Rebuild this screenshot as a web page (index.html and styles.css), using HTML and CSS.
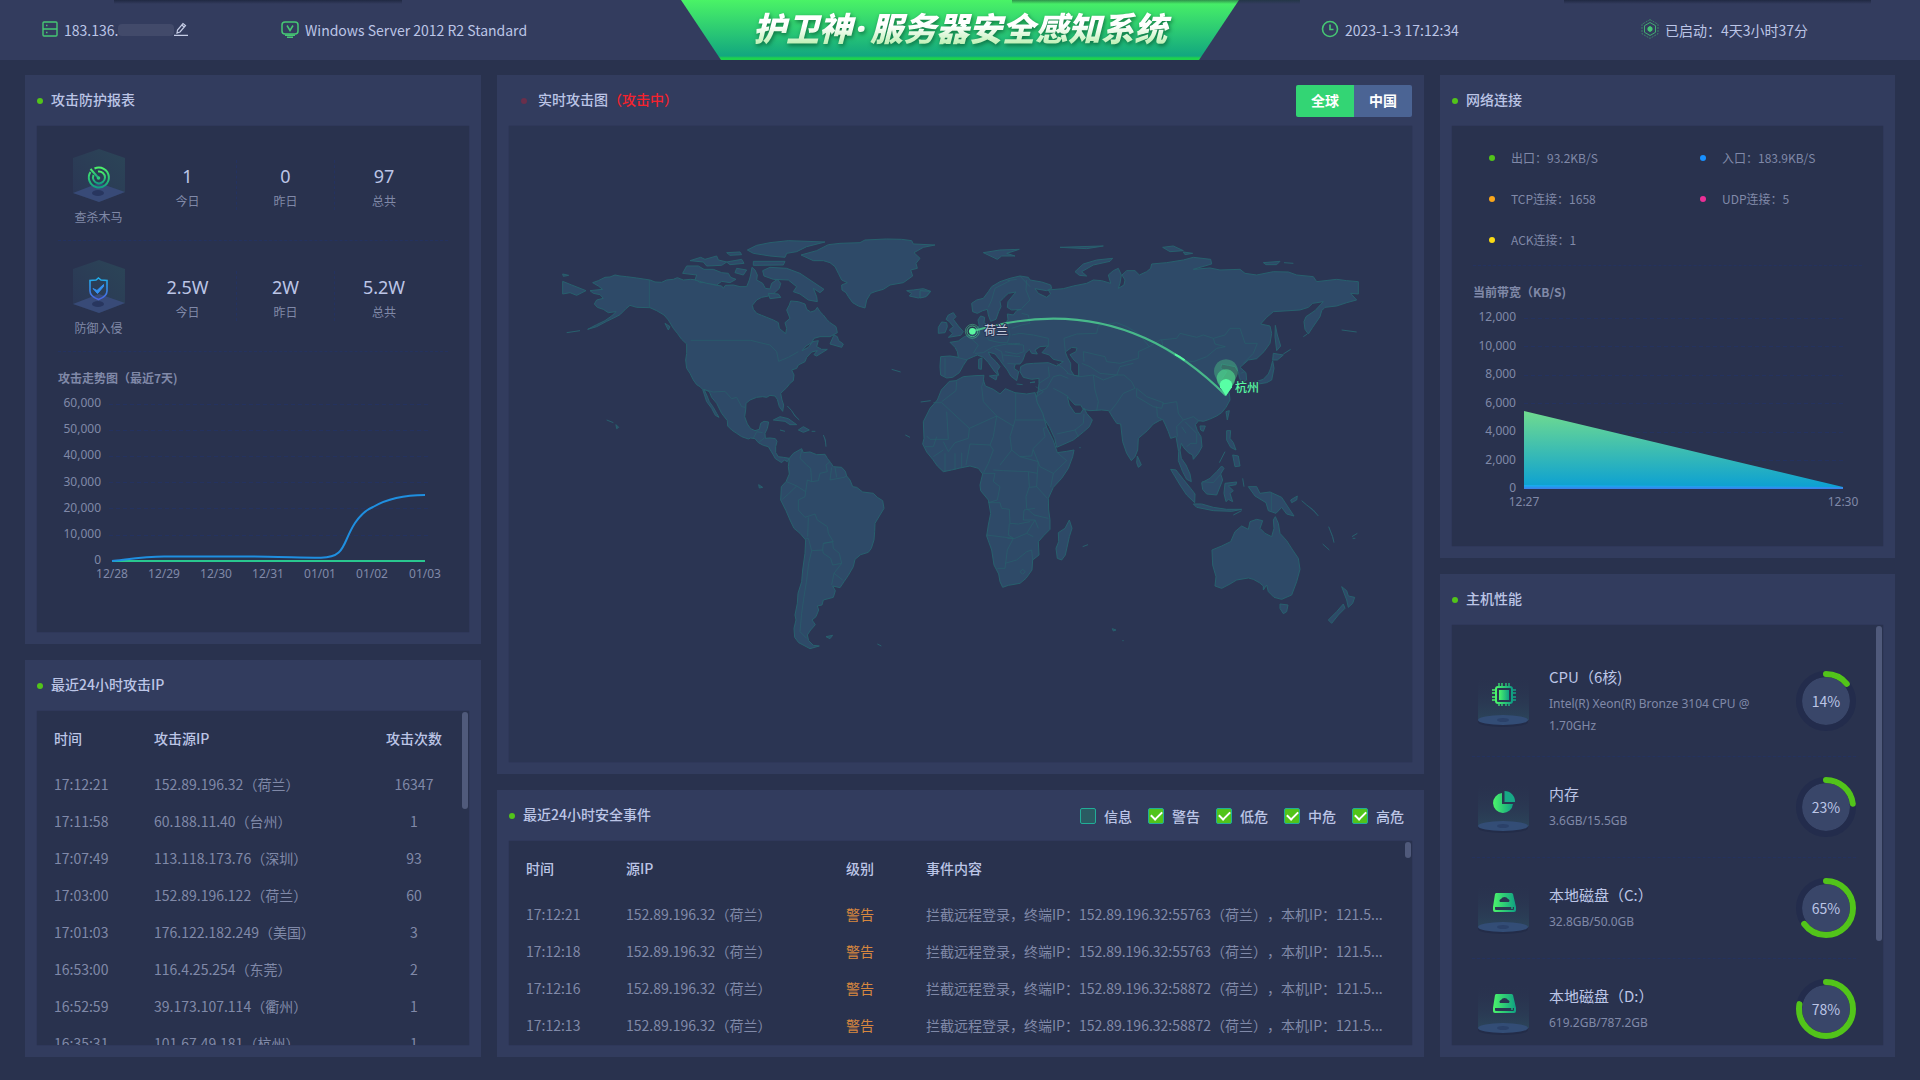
FILE: index.html
```html
<!DOCTYPE html>
<html lang="zh-CN">
<head>
<meta charset="utf-8">
<meta name="viewport" content="width=device-width, initial-scale=1">
<title>护卫神·服务器安全感知系统</title>
<link rel="stylesheet" href="styles.css">
</head>
<body>
<svg class="defs" width="0" height="0" aria-hidden="true">
  <defs>
    <linearGradient id="g-green-v" x1="0" y1="0" x2="0" y2="1"><stop offset="0" stop-color="#4cf169"/><stop offset="1" stop-color="#12a182"/></linearGradient>
    <linearGradient id="g-green-h" x1="0" y1="0" x2="1" y2="0"><stop offset="0" stop-color="#4cf56a"/><stop offset="1" stop-color="#0f9f83"/></linearGradient>
    <linearGradient id="g-blue-v" x1="0" y1="0" x2="0" y2="1"><stop offset="0" stop-color="#1fb0ea"/><stop offset="1" stop-color="#4a63e0"/></linearGradient>
    <linearGradient id="g-hex" x1="0" y1="1" x2="1" y2="0"><stop offset="0" stop-color="#2b3655"/><stop offset="1" stop-color="#2b4557"/></linearGradient>
    <linearGradient id="g-cyl" x1="0" y1="0" x2="0" y2="1"><stop offset="0" stop-color="#2a3450" stop-opacity="0"/><stop offset="1" stop-color="#2b445a"/></linearGradient>
    <linearGradient id="g-area" x1="0" y1="0" x2="0" y2="1"><stop offset="0" stop-color="#70db8f"/><stop offset="1" stop-color="#0a9fd4"/></linearGradient>
    <linearGradient id="g-band" x1="0" y1="0" x2="0" y2="1"><stop offset="0" stop-color="#12b2f0"/><stop offset="1" stop-color="#3f7ce8"/></linearGradient>
    <g id="hexbox">
      <path d="M26 0 52 9V43L26 53 0 44V9z" fill="url(#g-hex)"/>
      <path d="M0 44 26 34 52 43 26 53z" fill="#384a77"/>
      <ellipse cx="25" cy="44" rx="6" ry="3" fill="#28365f"/>
    </g>
    <g id="cylbox">
      <path d="M0 2H51V45H0z" fill="url(#g-cyl)"/>
      <ellipse cx="25" cy="47" rx="25" ry="5" fill="#232c48"/>
      <ellipse cx="25" cy="45" rx="25" ry="5" fill="#334d76"/>
      <ellipse cx="25" cy="45" rx="6" ry="2" fill="#2b4169"/>
    </g>
    <g id="disk">
      <path fill="url(#g-green-h)" fill-rule="evenodd" d="M18 11h15a2 2 0 0 1 2 1l3 13v3a2 2 0 0 1-2 2H17a2 2 0 0 1-2-2v-3l2-13a2 2 0 0 1 1-1zM22 20h9a2 2 0 0 0-1-3 4 4 0 0 0-7 0 2 2 0 0 0-1 3zM17 25v2q0 1 1 1h17q1 0 1-1v-2z"/>
      <circle cx="34" cy="26" r="1" fill="#1cb07f"/>
    </g>
  </defs>
</svg>

<header class="topbar">
  <div class="topbar-side topbar-left">
    <div class="info">
      <svg width="16" height="16" viewBox="0 0 16 16" fill="none" stroke="#46c774" stroke-width="1.4"><rect x="1" y="1" width="14" height="14" rx="1"/><path d="M1 8H15M4 4.500h1.500M4 11.500h1.500"/></svg>
      <span>183.136.</span><span class="masked"></span>
      <button class="edit" aria-label="编辑"><svg width="14" height="14" viewBox="0 0 14 14" fill="none" stroke="#c6cde6" stroke-width="1.200"><path d="M0 13.400H14M3 11 3.500 8 9 1.500 11.500 3.500 6 10zM8 3l2 2"/></svg></button>
    </div>
    <div class="info">
      <svg width="18" height="17" viewBox="0 0 18 17" fill="none" stroke="#46c774" stroke-width="1.500"><rect x="1" y="1" width="16" height="12" rx="3"/><path d="M6 4.500 9 9.500 12 4.500M4 14.300H14M6 16.300H12"/></svg>
      <span>Windows Server 2012 R2 Standard</span>
    </div>
  </div>
  <div class="banner"><h1>护卫神<span class="mid-dot">·</span>服务器安全感知系统</h1></div>
  <div class="topbar-side topbar-right">
    <div class="info">
      <svg width="18" height="18" viewBox="0 0 18 18" fill="none" stroke="#46c774" stroke-width="1.600"><circle cx="9" cy="9" r="7.500"/><path d="M9 4.500V9.500H12.500"/></svg>
      <span>2023-1-3 17:12:34</span>
    </div>
    <div class="info">
      <svg width="18" height="20" viewBox="0 0 18 20" fill="none" stroke="#46c774"><path d="M9 .600 17 5.300V14.700L9 19.400 1 14.700V5.300z" stroke-opacity=".5" stroke-dasharray="2 1"/><path d="M9 3.500 14.500 6.700V13.300L9 16.500 3.500 13.300V6.700z" stroke-opacity=".8"/><path d="M9 7.500 11 8.700V11.300L9 12.500 7 11.300V8.700z" fill="#46c774"/></svg>
      <span>已启动：4天3小时37分</span>
    </div>
  </div>
</header>

<main class="board">
  <div class="col col-left">
    <section class="panel">
      <header class="panel-head"><i class="dot"></i><h2>攻击防护报表</h2></header>
      <div class="box report">
        <div class="stat-row">
          <div class="stat-icon">
            <svg width="52" height="54" viewBox="0 0 52 54"><use href="#hexbox"/><g fill="none" stroke="url(#g-green-v)" stroke-width="2"><path d="M21.500 19.500A10 10 0 1 1 17.500 23"/><path d="M25 22.500A6 6 0 1 1 20.500 26"/><path d="M17.500 20 25.500 29"/></g><circle cx="25.500" cy="29" r="1.800" fill="#2ccc78"/></svg>
            <span>查杀木马</span>
          </div>
          <div class="stat"><b>1</b><span>今日</span></div>
          <div class="stat"><b>0</b><span>昨日</span></div>
          <div class="stat"><b>97</b><span>总共</span></div>
        </div>
        <div class="stat-row">
          <div class="stat-icon">
            <svg width="52" height="54" viewBox="0 0 52 54"><use href="#hexbox"/><path d="M25.500 18 28 20 34 20.500V31Q34 36.500 25.500 39.500 17 36.500 17 31V20.500L23 20z" fill="none" stroke="url(#g-blue-v)" stroke-width="1.600"/><path d="M20 28.500 24 30.500 30.500 24.500 30.500 26.500 24.500 33.500z" fill="#3490f0" stroke="#3490f0"/></svg>
            <span>防御入侵</span>
          </div>
          <div class="stat"><b>2.5W</b><span>今日</span></div>
          <div class="stat"><b>2W</b><span>昨日</span></div>
          <div class="stat"><b>5.2W</b><span>总共</span></div>
        </div>
        <h3 class="chart-title">攻击走势图（最近7天)</h3>
        <svg class="chart" viewBox="37 388 432 200">
          <path class="grid" d="M109 404.500H428M109 430.500H428M109 456.500H428M109 482.500H428M109 508.500H428M109 535.500H428"/>
          <g class="ylab"><text x="101" y="407">60,000</text><text x="101" y="433">50,000</text><text x="101" y="459">40,000</text><text x="101" y="486">30,000</text><text x="101" y="512">20,000</text><text x="101" y="538">10,000</text><text x="101" y="564">0</text></g>
          <g class="xlab"><text x="112" y="578">12/28</text><text x="164" y="578">12/29</text><text x="216" y="578">12/30</text><text x="268" y="578">12/31</text><text x="320" y="578">01/01</text><text x="372" y="578">01/02</text><text x="425" y="578">01/03</text></g>
          <path d="M112 561H425" stroke="#29c78f" stroke-width="2"/>
          <path d="M112 561C130 559 146 556.500 164 556.500C200 556.500 232 556.200 268 556.700C290 557 300 557.700 321 557.700C346 557.700 342 543 355 523C361 514 366 510 373 507C390 497 408 495 425 495" fill="none" stroke="#1f8fe0" stroke-width="2"/>
        </svg>
      </div>
    </section>
    <section class="panel">
      <header class="panel-head"><i class="dot"></i><h2>最近24小时攻击IP</h2></header>
      <div class="box">
        <div class="scroll">
          <table class="data ips">
            <thead><tr><th>时间</th><th>攻击源IP</th><th>攻击次数</th></tr></thead>
            <tbody>
              <tr><td>17:12:21</td><td>152.89.196.32（荷兰）</td><td>16347</td></tr>
              <tr><td>17:11:58</td><td>60.188.11.40（台州）</td><td>1</td></tr>
              <tr><td>17:07:49</td><td>113.118.173.76（深圳）</td><td>93</td></tr>
              <tr><td>17:03:00</td><td>152.89.196.122（荷兰）</td><td>60</td></tr>
              <tr><td>17:01:03</td><td>176.122.182.249（美国）</td><td>3</td></tr>
              <tr><td>16:53:00</td><td>116.4.25.254（东莞）</td><td>2</td></tr>
              <tr><td>16:52:59</td><td>39.173.107.114（衢州）</td><td>1</td></tr>
              <tr><td>16:35:31</td><td>101.67.49.181（杭州）</td><td>1</td></tr>
            </tbody>
          </table>
        </div>
        <i class="thumb" style="height:29%"></i>
      </div>
    </section>
  </div>

  <div class="col col-mid">
    <section class="panel">
      <header class="panel-head head-map"><i class="dot dot-alert"></i><h2>实时攻击图<span class="alert">（攻击中）</span></h2>
        <div class="tabs"><button class="tab active">全球</button><button class="tab">中国</button></div>
      </header>
      <div class="box map">
        <svg viewBox="509 126 903 636">
          <g class="land" transform="translate(540 220) scale(.33333)">
            <path d="M158 188 175 182 195 172 210 171 225 165 240 168 260 170 290 174 330 180 345 186 365 187 380 180 400 178 412 173 430 180 452 178 470 180 480 188 500 187 520 194 545 198 550 205 556 196 580 195 600 200 620 200 628 180 632 165 636 142 645 150 652 165 650 180 668 190 676 205 690 207 695 190 712 178 722 190 718 205 700 222 722 232 700 232 686 228 665 232 650 240 637 256 640 268 650 280 665 286 680 292 700 300 715 308 718 325 726 332 737 341 740 325 735 308 750 295 740 270 748 255 752 243 775 245 795 252 800 268 812 276 825 272 832 262 840 275 850 285 860 298 870 308 888 320 892 338 870 350 840 350 822 355 815 368 798 378 786 392 805 382 818 365 835 362 830 380 845 388 862 388 830 408 822 404 832 392 815 396 800 412 795 425 775 435 770 445 755 450 762 465 760 482 750 490 740 503 722 520 726 540 731 555 728 574 718 560 712 538 705 528 690 526 680 532 668 530 650 532 630 540 618 550 617 570 614 590 622 612 632 626 645 632 658 628 662 610 672 604 686 606 682 625 675 640 676 655 690 654 706 656 711 664 707 680 707 698 715 710 730 712 748 715 742 725 733 720 725 728 706 716 700 705 685 680 670 676 655 668 645 656 632 654 625 657 605 650 590 640 575 630 563 618 562 602 545 580 530 550 515 532 508 515 492 508 500 525 508 545 520 562 530 580 537 592 526 586 515 565 500 545 488 508 480 500 470 494 460 480 450 460 440 445 437 420 440 400 440 372 425 358 412 340 400 325 385 300 372 285 350 272 330 263 290 262 270 256 258 266 240 284 225 292 200 304 170 320 143 328 170 314 195 302 215 288 228 275 205 278 190 268 172 262 163 252 170 240 190 235 180 224 160 220 150 212 188 208 175 198z"/>
            <path d="M68 184 95 195 138 212 110 226 90 218 68 222zM68 162 86 166 70 169z"/>
            <path d="M428 160 440 138 475 138 492 148 520 148 545 158 565 160 572 172 588 178 570 188 545 184 530 195 500 190 465 180 470 165zM450 122 482 112 495 118 530 108 535 120 560 126 545 136 500 138 490 126zM560 98 600 96 605 104 570 106zM622 90 650 76 690 68 745 62 855 66 800 80 770 95 740 100 735 112 690 108 640 100zM640 124 735 124 730 135 640 136zM590 145 620 150 610 165 585 158zM668 152 690 142 740 145 780 160 810 180 852 208 840 218 820 205 830 230 832 245 805 240 780 222 760 215 770 200 745 180 700 178 672 168zM560 126 605 118 612 130 570 134zM685 220 715 222 722 232 690 236z"/>
            <path d="M783 105 830 92 865 74 900 70 960 68 975 60 1040 57 1085 58 1115 62 1120 72 1185 75 1150 82 1122 98 1140 115 1128 130 1132 145 1112 150 1118 168 1090 188 1050 195 1030 208 1008 214 992 220 980 240 975 264 955 258 938 248 925 230 918 218 906 210 905 195 922 188 905 180 895 160 885 140 870 128 850 122 820 122z"/>
            <path d="M1100 212 1120 210 1150 206 1172 214 1160 228 1135 234 1108 228 1115 220zM1195 322 1205 306 1220 308 1222 320 1215 338 1195 340zM1225 285 1240 278 1248 290 1240 298 1255 318 1270 335 1262 346 1225 352 1238 340 1228 330 1240 320 1228 305 1218 298z"/>
            <path d="M870 372 882 345 892 350 896 362 910 372 905 382zM700 600 720 590 745 596 770 614 750 614 735 604zM775 630 790 620 808 630 790 637zM742 558 755 572 765 588 778 600M720 630 735 634M815 634H826M850 645 856 660 858 680M200 600 220 608M228 614 236 622 230 626zM656 794 668 802 658 804zM858 1250 878 1246 870 1256zM1012 1272 1024 1278M1055 448 1082 456M1142 546 1172 542M1096 645 1110 652M80 338 120 332M375 310 390 320 385 330z"/>
            <path d="M748 715 760 700 785 686 790 698 810 696 830 704 855 703 862 715 872 728 880 740 905 742 916 754 920 768 930 780 938 800 950 802 968 816 1000 820 1012 832 1028 842 1032 865 1020 885 1005 910 1004 935 1002 960 994 985 985 997 962 1004 945 1018 940 1040 925 1066 912 1085 900 1103 878 1098 886 1112 880 1132 850 1140 846 1155 832 1158 836 1170 828 1190 816 1200 826 1214 812 1230 802 1245 806 1262 820 1276 838 1278 810 1286 795 1278 776 1268 764 1252 762 1225 768 1200 765 1185 772 1150 774 1120 785 1085 788 1050 795 1000 797 960 780 940 762 925 750 900 738 872 722 840 724 800 738 785 748 762 745 740z"/>
            <path class="border" d="M328 180V262M452 361H632L660 368 690 375 710 395 716 424 745 412 775 395M488 508 520 516 555 514 575 536 590 532 605 560 616 562M640 655 650 635 668 638M655 668 672 655M785 690 780 715 800 735 812 745 815 785 835 782 840 760 862 755 858 735 870 725M875 742 870 780 912 772 920 768M885 742 890 772M740 785 770 798 797 815 802 780 815 785M727 838 745 822 770 798M797 815 795 830 775 840 775 870 795 892 825 882 832 900 862 920 865 940 880 965 850 970 848 990 815 992 805 955 797 955M805 892 803 950M850 970 878 965 880 985 898 1000 905 1030 878 1035 872 1015 850 1000 848 990M905 1030 882 1060 908 1080M882 1060 875 1095M815 992 806 1030 800 1080 792 1130 785 1180 780 1235 800 1255"/>
          </g>
          <g class="land" transform="translate(920 220) scale(.33333)">
            <path d="M62 410 90 408 115 412 112 395 105 382 90 367 115 363 133 350 150 345 165 328 178 318 174 300 182 288 194 292 192 308 205 318 240 316 258 308 264 298 262 282 280 285 290 272 304 268 275 270 262 262 264 245 280 225 288 216 265 220 252 232 240 245 243 260 236 275 228 298 212 304 205 285 202 268 188 272 172 280 158 275 155 250 170 240 190 235 205 215 215 200 240 185 270 175 300 168 325 172 330 180 365 186 392 195 395 205 380 212 345 206 355 220 380 232 392 222 385 210 430 206 460 198 500 190 520 180 545 182 572 190 565 165 580 152 595 145 604 165 600 190 595 205 612 195 615 180 606 165 620 152 645 152 658 165 680 155 692 145 695 132 740 128 790 120 820 112 872 118 875 132 820 148 870 144 900 150 960 148 975 160 1010 165 1060 155 1105 156 1130 165 1180 170 1190 185 1250 178 1280 182 1315 185 1315 222 1292 220 1310 240 1280 248 1250 258 1215 262 1205 272 1200 290 1178 322 1165 342 1155 328 1152 305 1158 290 1185 272 1210 245 1178 250 1165 262 1140 270 1060 275 1040 292 1022 312 1050 318 1055 340 1050 370 1032 395 1010 416 985 420 960 442 978 458 980 480 965 490 958 472 955 455 945 440 925 436 905 432 902 445 920 455 905 478 912 498 928 520 930 540 918 562 905 578 890 588 868 598 850 604 836 602 826 614 832 632 843 650 846 680 835 700 820 718 818 705 805 698 792 684 784 670 780 690 784 715 798 735 810 762 814 785 800 778 788 755 775 722 776 695 768 650 752 655 745 635 735 612 728 598 718 602 700 612 682 632 655 655 653 690 645 710 634 722 620 700 608 665 602 612 590 610 578 592 566 572 545 570 510 572 490 568 482 555 465 555 442 530 448 555 465 580 482 580 492 564 500 580 517 600 508 620 490 636 460 660 410 682 404 655 388 620 368 590 352 552 347 538 355 510 357 490 357 475 335 478 310 472 300 455 302 440 318 432 340 430 385 428 410 438 430 425 400 418 388 405 366 398 384 378 360 380 345 390 352 402 335 400 328 388 316 400 308 422 300 432 286 432 282 445 296 455 290 482 272 468 262 450 248 432 238 418 225 402 205 396 212 410 228 425 240 440 232 452 236 466 224 455 205 428 190 412 172 405 160 410 142 418 130 436 118 458 98 472 80 474 62 465 60 440z"/>
            <path d="M0 212 32 214 18 230 0 234zM190 98 240 90 298 88 260 100 285 108 245 108 232 118zM465 155 490 132 530 120 578 115 570 124 520 135 485 155 500 168 478 166zM420 82 480 80 550 78 500 86zM728 82 760 78 790 92 750 95zM790 96 818 100 795 104zM1030 128 1080 124 1070 134 1038 134zM1092 128 1120 130M176 418 186 414 184 448 176 446zM208 468 232 465 228 480zM290 492 308 494M330 488 345 486z"/>
            <path d="M88 484 108 482 130 470 165 467 192 466 190 480 196 498 220 508 240 522 256 506 285 518 320 522 345 518 352 548 368 580 380 622 400 662 412 698 440 694 462 690 458 710 445 745 425 775 400 802 385 835 386 870 390 900 390 928 372 946 355 965 357 1005 338 1020 336 1050 318 1075 300 1090 265 1096 248 1102 240 1085 236 1062 222 1035 215 990 200 948 205 915 212 880 205 840 182 812 180 795 188 762 175 745 150 738 120 744 95 750 70 755 52 738 38 718 20 696 8 672 12 655 10 605 30 565 52 540 64 510z"/>
            <path d="M448 900 456 925 448 950 436 1005 425 1020 412 1015 408 985 416 965 415 938 435 925zM652 708 664 735 655 742 650 728zM840 618 856 618 850 634 842 630zM918 575 928 572 922 600zM1058 420 1060 400 1090 405 1072 420zM1058 422 1062 445 1055 480 1040 488 1015 492 1000 500 985 498 1000 488 1030 478 1045 462 1052 445zM1066 316 1072 345 1082 378 1070 392 1065 350zM1090 402 1112 388M1150 350 1162 342"/>
            <path d="M752 748 768 750 790 778 812 805 825 822 824 848 800 825 780 795 765 770zM820 852 845 852 880 862 920 868 965 868 935 874 880 872 830 862zM845 788 870 775 890 755 905 738 912 745 902 762 908 780 890 825 860 822 848 808zM915 790 950 786 948 794 925 798 940 812 930 820 938 845 925 838 918 845 912 820zM920 632 932 632 930 655 940 668 948 690 932 682 920 660zM938 705 955 708 960 738 945 740zM898 728 915 695M968 775 972 800M940 885 965 872M985 800 1010 800 1020 820 1050 816 1085 832 1100 855 1122 888 1100 882 1085 862 1068 880 1045 872 1038 848 1005 828zM1112 840 1132 828 1130 840 1115 848zM1145 842 1160 855 1180 870 1195 888M1226 920 1238 950 1242 968M1208 972 1228 990M1296 950 1312 940M1298 955H1306M1265 330 1310 336M478 683H482M488 980 504 974"/>
            <path d="M876 990 905 978 932 965 945 935 965 918 985 928 990 905 1010 898 1028 902 1020 925 1035 940 1055 950 1062 925 1060 900 1066 890 1075 910 1080 940 1100 962 1118 990 1135 1015 1140 1048 1130 1085 1115 1125 1085 1138 1062 1132 1045 1115 1040 1095 1030 1110 1030 1098 1018 1088 1000 1078 985 1074 950 1080 930 1092 905 1105 885 1098 888 1070 878 1035zM1080 1152 1104 1155 1100 1175 1090 1181 1080 1165zM1265 1100 1280 1112 1285 1128 1304 1132 1298 1150 1285 1162 1280 1140zM1270 1152 1275 1165 1255 1185 1235 1210 1225 1200 1250 1175zM577 1226 588 1230 580 1233zM607 1262H611"/>
            <path class="sea" d="M436 396 455 382 471 384 468 395 450 404 462 420 476 432 476 468 462 466 452 450 452 430 442 412z"/>
            <path class="border" d="M75 415V468M110 412 142 420M160 400 175 375 160 362 148 345M165 400 190 398 220 380 260 372 300 370M200 340 205 360 240 368 262 368M180 318V345M275 325 305 315 330 310 325 285 305 280M305 265 330 240 318 210 320 180M205 262 215 240 225 205 270 182M262 182 290 178M275 345 300 340 340 345 385 355 385 380M262 372 310 375 312 395 290 402 255 395M225 385 245 395 250 425M250 405 280 408 300 410M262 430 285 432M262 300 270 345 262 368M432 355 470 342 530 340 535 318 590 308 620 320 655 340 688 380 720 360 770 355 780 340 830 352 850 345 880 355 915 345 930 325 960 325 975 370 1012 370 1000 400 970 430M432 355 436 395M725 360 730 385 780 420 820 425 860 410 890 385 916 380 885 372 880 355M688 380 655 395 655 415 600 430 560 425 555 410 490 395 492 425M485 430 510 440 540 460 590 465 600 440 640 430M440 460 480 470 520 465 550 480 590 465 612 465 635 485 645 505 610 520 590 550 570 575M520 465 525 510 535 545 530 572M650 505 680 530 730 548 725 565 700 560 650 530zM728 552 770 545 775 580 790 600 770 620 772 650M710 560 712 590 725 598M790 600 820 590 838 604M795 605 830 640 830 670 812 670 800 680M798 640 785 620M345 520 380 505 400 470 420 465 445 475M385 440 388 470 357 490M400 505 420 515 445 530M410 430 430 445 445 460M410 642 465 630 490 610 492 582M465 630 475 650M347 500 370 515 350 530M1054 818V872M846 785 880 788 900 765M975 455 962 460M300 168 330 200"/>
            <path class="border" d="M110 484 108 512 65 545M40 548H65L148 625 230 588 190 545 185 500 192 480M80 575 85 658H30L20 648M148 625 145 655 105 668 85 695 70 665M230 588 280 618 287 595V518M287 600H372M230 588 220 650 210 675 150 672 138 735M280 618 270 650 275 690 300 710 335 708 340 685 375 650 370 625 380 622M210 675 220 690 205 730 190 760M240 735 275 690M220 750 250 752 325 755 352 760 355 725 300 710M340 690 360 740 400 760 440 722 412 698M400 760 392 802M325 755 328 800 318 830 320 865 342 885 385 895M328 802 350 800 382 835M352 760 350 800M190 760H225L220 785 240 800 232 840 205 848M205 848H240L245 865 268 868 270 910 295 912 330 905M268 910 265 945 280 955 200 945M280 955 262 990 255 1045H232M262 955 285 955 320 940 340 950M255 1030 290 1020 320 995 335 990 338 1020M320 940 345 900 310 900 312 870 345 865M355 925 345 900M300 1055 308 1048 316 1055 308 1063zM105 700V750M125 698V742M75 700V755M40 710 70 690M15 680H40L50 650"/>
          </g>
          <g transform="translate(920 220) scale(.33333)">
            <path d="M157 334Q595 202 918 527" fill="none" stroke="#4ccb90" stroke-opacity=".85" stroke-width="6"/>
            <path d="M765 403Q780 410 794 421" fill="none" stroke="#57f7a1" stroke-width="6"/>
            <g fill="none" stroke="#4ddb92"><circle cx="157" cy="334" r="21" stroke-width="3" stroke-opacity=".45"/><circle cx="157" cy="334" r="16" stroke-width="3" stroke-opacity=".7"/></g>
            <circle cx="157" cy="334" r="10" fill="#5af7a0"/>
            <g fill="#50e090">
              <path fill-opacity=".35" d="M886 470A36 36 0 1 1 950 470L918 527z"/>
              <path fill-opacity=".6" d="M893 488A28 28 0 1 1 943 488L918 527z"/>
              <path fill="#58ffa5" d="M900 502A19 19 0 1 1 936 502L918 527z"/>
            </g>
          </g>
          <text class="place" x="984" y="335">荷兰</text>
          <text class="place target" x="1235" y="392">杭州</text>
        </svg>
      </div>
    </section>
    <section class="panel">
      <header class="panel-head"><i class="dot"></i><h2>最近24小时安全事件</h2>
        <div class="filters">
          <label><input type="checkbox">信息</label>
          <label><input type="checkbox" checked>警告</label>
          <label><input type="checkbox" checked>低危</label>
          <label><input type="checkbox" checked>中危</label>
          <label><input type="checkbox" checked>高危</label>
        </div>
      </header>
      <div class="box">
        <div class="scroll">
          <table class="data events">
            <thead><tr><th>时间</th><th>源IP</th><th>级别</th><th>事件内容</th></tr></thead>
            <tbody>
              <tr><td>17:12:21</td><td>152.89.196.32（荷兰）</td><td class="warn">警告</td><td>拦截远程登录，终端IP：152.89.196.32:55763（荷兰），本机IP：121.5...</td></tr>
              <tr><td>17:12:18</td><td>152.89.196.32（荷兰）</td><td class="warn">警告</td><td>拦截远程登录，终端IP：152.89.196.32:55763（荷兰），本机IP：121.5...</td></tr>
              <tr><td>17:12:16</td><td>152.89.196.32（荷兰）</td><td class="warn">警告</td><td>拦截远程登录，终端IP：152.89.196.32:58872（荷兰），本机IP：121.5...</td></tr>
              <tr><td>17:12:13</td><td>152.89.196.32（荷兰）</td><td class="warn">警告</td><td>拦截远程登录，终端IP：152.89.196.32:58872（荷兰），本机IP：121.5...</td></tr>
            </tbody>
          </table>
        </div>
        <i class="thumb" style="height:8%"></i>
      </div>
    </section>
  </div>

  <div class="col col-right">
    <section class="panel">
      <header class="panel-head"><i class="dot"></i><h2>网络连接</h2></header>
      <div class="box net">
        <ul class="legend">
          <li><i class="dot"></i>出口：93.2KB/S</li>
          <li><i class="dot dot-blue"></i>入口：183.9KB/S</li>
          <li><i class="dot dot-orange"></i>TCP连接：1658</li>
          <li><i class="dot dot-pink"></i>UDP连接：5</li>
          <li><i class="dot dot-yellow"></i>ACK连接：1</li>
        </ul>
        <h3 class="chart-title">当前带宽（KB/S)</h3>
        <svg class="chart" viewBox="1452 302 431 220">
          <path class="grid" d="M1524 318.500H1843M1524 346.500H1843M1524 375.500H1843M1524 403.500H1843M1524 432.500H1843M1524 460.500H1843"/>
          <path d="M1524 411 1843 487V489H1524z" fill="url(#g-area)"/>
          <path d="M1524 485 1843 487V489H1524z" fill="url(#g-band)"/>
          <g class="ylab"><text x="1516" y="321">12,000</text><text x="1516" y="350">10,000</text><text x="1516" y="378">8,000</text><text x="1516" y="407">6,000</text><text x="1516" y="435">4,000</text><text x="1516" y="464">2,000</text><text x="1516" y="492">0</text></g>
          <g class="xlab"><text x="1524" y="506">12:27</text><text x="1843" y="506">12:30</text></g>
        </svg>
      </div>
    </section>
    <section class="panel">
      <header class="panel-head"><i class="dot"></i><h2>主机性能</h2></header>
      <div class="box">
        <div class="scroll hosts">
          <div class="host host-tall">
            <svg width="52" height="52" viewBox="0 0 52 52"><use href="#cylbox"/><g stroke="url(#g-green-h)" fill="none" stroke-width="1.400"><rect x="18" y="12" width="16" height="16" rx="2" stroke-width="2"/><path d="M21 8v3.500M24 8v3.500M28 8v3.500M31 8v3.500M21 28v3M24 28v3M28 28v3M31 28v3M14 15h3M14 18h3M14 22h3M14 25h3M35 15h3M35 18h3M35 22h3M35 25h3"/></g><rect x="21" y="15" width="10" height="10" fill="url(#g-green-h)"/></svg>
            <div class="host-text"><h3>CPU（6核)</h3><p>Intel(R) Xeon(R) Bronze 3104 CPU @ 1.70GHz</p></div>
            <div class="ring"><svg viewBox="0 0 60 60"><circle class="disc" cx="30" cy="30" r="24"/><circle class="track" cx="30" cy="30" r="27"/><circle class="value" cx="30" cy="30" r="27" pathLength="100" stroke-dasharray="14 100"/></svg><span>14%</span></div>
          </div>
          <div class="host">
            <svg width="52" height="52" viewBox="0 0 52 52"><use href="#cylbox"/><path d="M24 12A10 10 0 1 0 35 23H24z" fill="url(#g-green-h)"/><path d="M26.500 10A10.500 10.500 0 0 1 37 21H26.500z" fill="#17a886"/></svg>
            <div class="host-text"><h3>内存</h3><p>3.6GB/15.5GB</p></div>
            <div class="ring"><svg viewBox="0 0 60 60"><circle class="disc" cx="30" cy="30" r="24"/><circle class="track" cx="30" cy="30" r="27"/><circle class="value" cx="30" cy="30" r="27" pathLength="100" stroke-dasharray="23 100"/></svg><span>23%</span></div>
          </div>
          <div class="host">
            <svg width="52" height="52" viewBox="0 0 52 52"><use href="#cylbox"/><use href="#disk"/></svg>
            <div class="host-text"><h3>本地磁盘（C:）</h3><p>32.8GB/50.0GB</p></div>
            <div class="ring"><svg viewBox="0 0 60 60"><circle class="disc" cx="30" cy="30" r="24"/><circle class="track" cx="30" cy="30" r="27"/><circle class="value" cx="30" cy="30" r="27" pathLength="100" stroke-dasharray="65 100"/></svg><span>65%</span></div>
          </div>
          <div class="host">
            <svg width="52" height="52" viewBox="0 0 52 52"><use href="#cylbox"/><use href="#disk"/></svg>
            <div class="host-text"><h3>本地磁盘（D:）</h3><p>619.2GB/787.2GB</p></div>
            <div class="ring"><svg viewBox="0 0 60 60"><circle class="disc" cx="30" cy="30" r="24"/><circle class="track" cx="30" cy="30" r="27"/><circle class="value" cx="30" cy="30" r="27" pathLength="100" stroke-dasharray="78 100"/></svg><span>78%</span></div>
          </div>
        </div>
        <i class="thumb" style="height:75%"></i>
      </div>
    </section>
  </div>
</main>
</body>
</html>
```
FILE: styles.css
```css
:root {
  --bg: #29324e;
  --panel: #323c5e;
  --text: #bcc5e6;
  --muted: #8089a8;
  --line: #24325f;
  --green: #52c41a;
}

* { box-sizing: border-box; margin: 0; padding: 0; }

body {
  display: flex;
  flex-direction: column;
  height: 100vh;
  background: var(--bg);
  color: var(--text);
  font: 14px/20px "Noto Sans CJK SC", "Noto Sans", sans-serif;
  text-spacing-trim: space-all;
  overflow: hidden;
}

svg { display: block; flex: none; }
button { border: 0; background: none; font: inherit; color: inherit; }
.defs { position: absolute; }

/* top bar */
.topbar {
  position: relative;
  display: grid;
  grid-template-columns: 1fr 558px 1fr;
  height: 60px;
  flex: none;
  background: #333c5e;
}
.topbar::after {
  content: "";
  position: absolute;
  inset: 0 0 auto;
  height: 4px;
  background:
    linear-gradient(rgba(20, 28, 48, .6), transparent) 7% 0 / 15% 100% no-repeat,
    linear-gradient(rgba(20, 48, 48, .5), transparent) 62% 0 / 15% 100% no-repeat,
    linear-gradient(rgba(20, 28, 48, .6), transparent) 97% 0 / 16% 100% no-repeat;
}
.topbar-side { display: grid; align-items: center; }
.topbar-left { grid-template-columns: 239px 1fr; padding-left: 42px; }
.topbar-right { grid-template-columns: 320px 1fr; padding-left: 82px; }
.info { display: flex; align-items: center; gap: 6px; }
.info svg { margin-bottom: 2px; }
.masked {
  width: 56px;
  height: 12px;
  margin-left: -6px;
  border-radius: 4px;
  background: #424a6a;
}
.edit { margin-left: -6px; }

.banner {
  display: flex;
  justify-content: center;
  align-items: center;
  background: linear-gradient(#4af366, #12a77f 56px, #1ed24e 58px);
  clip-path: polygon(0 0, 100% 0, 518px 100%, 40px 100%);
}
.banner h1 {
  font-size: 33px;
  line-height: 44px;
  font-weight: 900;
  font-style: italic;
  background: linear-gradient(#fff 45%, #bdf0b4 85%);
  -webkit-background-clip: text;
  background-clip: text;
  color: transparent;
  filter: drop-shadow(1px 2px 2px rgba(6, 92, 52, .8));
  padding: 0 6px;
  margin-bottom: 4px;
}
.mid-dot { margin: 0 4px; font-family: "Noto Sans", sans-serif; }

/* board */
.board {
  flex: 1;
  min-height: 0;
  display: grid;
  grid-template-columns: 456fr 927fr 455fr;
  gap: 16px;
  padding: 15px 25px 23px;
}
.col { display: grid; gap: 16px; min-width: 0; min-height: 0; }
.col-left { grid-template-rows: minmax(0, 569fr) minmax(0, 397fr); }
.col-mid { grid-template-rows: minmax(0, 699fr) minmax(0, 267fr); }
.col-right { grid-template-rows: minmax(0, 1fr) minmax(0, 1fr); }
.panel {
  display: flex;
  flex-direction: column;
  min-width: 0;
  padding: 0 12px 12px;
  background: var(--panel);
}

.panel-head { display: flex; align-items: center; gap: 8px; height: 51px; flex: none; }
.panel-head h2 { padding-bottom: 3px; font-size: 14px; line-height: 20px; font-weight: 500; }
.dot { width: 6px; height: 6px; flex: none; border-radius: 50%; background: var(--green); }
.dot-blue { background: #1890ff; }
.dot-orange { background: #faa61a; }
.dot-pink { background: #eb2f96; }
.dot-yellow { background: #fadb14; }
.dot-alert { background: #6a2f4b; }
.head-map { padding-left: 12px; gap: 11px; }
.alert { color: #f5222d; }

.box { position: relative; flex: 1; min-height: 0; background: var(--bg); box-shadow: 0 0 1px #232c48; overflow: hidden; }
.scroll { height: 100%; overflow-y: auto; scrollbar-width: none; }
.thumb { position: absolute; top: 1px; right: 1px; width: 6px; border-radius: 3px; background: #505a7b; }

/* attack report */
.report { padding-top: 4px; }
.stat-row {
  display: grid;
  grid-template-columns: 81px repeat(3, 1fr);
  align-items: center;
  height: 111px;
  margin: 0 21px;
  padding-right: 15px;
  border-bottom: 1px dashed var(--line);
}
.stat-icon { display: flex; flex-direction: column; align-items: center; gap: 5px; padding-top: 4px; }
.stat-icon span, .stat span { font-size: 12px; line-height: 18px; color: var(--muted); }
.stat { display: flex; flex-direction: column; align-items: center; border-right: 1px dashed var(--line); }
.stat:last-child { border-right: 0; }
.stat b { font-family: "Noto Sans", sans-serif; font-size: 18px; line-height: 32px; font-weight: 400; }

.chart-title { margin: 17px 21px 1px; font-size: 12px; line-height: 18px; font-weight: 700; color: var(--muted); }
.chart { width: 100%; height: auto; }
.chart text { font-family: "Noto Sans", sans-serif; font-size: 12px; fill: var(--muted); }
.ylab { text-anchor: end; }
.xlab { text-anchor: middle; }
.grid { stroke: var(--line); stroke-dasharray: 4 3; fill: none; }

/* data tables */
.data { width: 100%; border-collapse: collapse; table-layout: fixed; color: var(--muted); }
.data th { height: 54px; text-align: left; font-weight: 500; color: var(--text); }
.data td { height: 37px; white-space: nowrap; }
.data th:first-child, .data td:first-child { padding-left: 17px; width: 117px; }
.ips th:last-child, .ips td:last-child { width: 110px; text-align: center; }
.events th:nth-child(2) { width: 220px; }
.events th:nth-child(3) { width: 80px; }
.warn { color: #d6873f; }

/* map */
.map { background: #2b3553; }
.map svg { width: 100%; height: 100%; }
.land path { fill: #2e4a68; stroke: #27606d; stroke-width: 3; stroke-linejoin: round; }
.land .border { fill: none; stroke-width: 2; }
.land .sea { fill: #2b3553; }
.place { font-size: 12px; fill: #ccd2e2; stroke: #2b3553; stroke-width: 2px; paint-order: stroke; }
.place.target { fill: #58f7a1; font-weight: 500; }

.tabs { display: flex; margin-left: auto; border-radius: 2px; overflow: hidden; }
.tab { width: 58px; height: 32px; padding-bottom: 2px; background: #4b6494; color: #fff; font-weight: 700; }
.tab.active { background: #33d574; }

.filters { display: flex; gap: 16px; margin-left: auto; padding-right: 8px; font-weight: 500; }
.filters label { display: flex; align-items: center; gap: 8px; }
.filters input {
  appearance: none;
  width: 16px;
  height: 16px;
  border: 1px solid #21ad97;
  border-radius: 2px;
  background: #2a5b62;
}
.filters input:checked { background: var(--green); display: grid; place-items: center; }
.filters input:checked::after {
  content: "";
  width: 5px;
  height: 9px;
  border: solid #fff;
  border-width: 0 2px 2px 0;
  transform: translateY(-1px) rotate(45deg);
}

/* network */
.net { padding-top: 11px; }
.legend {
  display: grid;
  grid-template-columns: 211px 1fr;
  margin: 0 21px;
  padding: 0 0 5px 16px;
  border-bottom: 1px dashed var(--line);
  list-style: none;
}
.legend li { display: flex; align-items: center; gap: 16px; height: 41px; font-size: 12px; color: var(--muted); }

/* host performance */
.hosts { padding: 21px 27px 0 20px; }
.host { display: flex; align-items: center; height: 101px; padding-left: 6px; border-bottom: 1px dashed var(--line); }
.host:last-child { border-bottom-color: transparent; }
.host-tall { height: 111px; }
.host-text { flex: 1; max-width: 240px; margin-left: 19px; padding-bottom: 4px; }
.host-text h3 { font-size: 15px; line-height: 32px; font-weight: 400; }
.host-text p { font-family: "Noto Sans", sans-serif; font-size: 12px; line-height: 22px; color: var(--muted); }
.ring { position: relative; display: grid; place-items: center; width: 60px; height: 60px; margin-left: auto; }
.ring svg { position: absolute; inset: 0; transform: rotate(-90deg); }
.ring span { position: relative; }
.ring circle { fill: none; stroke-width: 6; }
.ring .disc { fill: #394669; }
.ring .track { stroke: #232c4c; }
.ring .value { stroke: var(--green); stroke-linecap: round; }
```
